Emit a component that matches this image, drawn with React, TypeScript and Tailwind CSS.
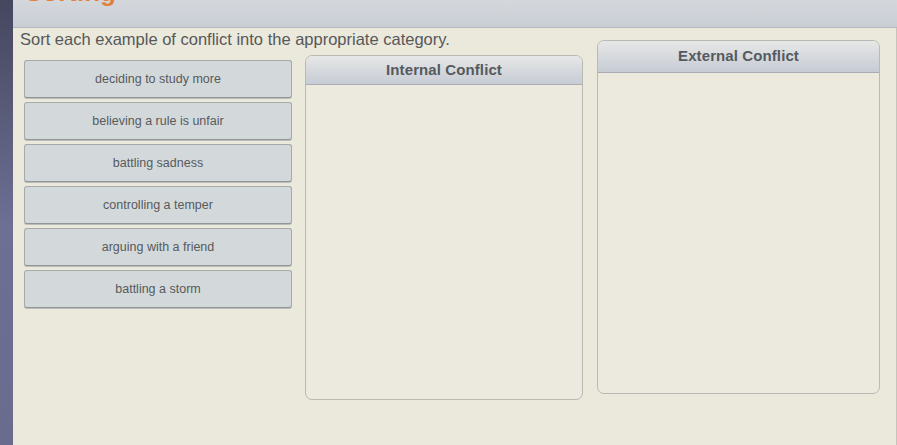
import React from "react";

const items = [
  "deciding to study more",
  "believing a rule is unfair",
  "battling sadness",
  "controlling a temper",
  "arguing with a friend",
  "battling a storm",
];

function Bin({ title, className, head }: { title: string; className: string; head: string }) {
  return (
    <div
      className={
        "flex flex-col rounded-[7px] border border-[#b9bab3] bg-[#ece9de] overflow-hidden " +
        className
      }
    >
      <div
        className={
          "shrink-0 flex items-center justify-center bg-gradient-to-b from-[#e6e7e6] to-[#c7ccd5] border-b border-[#a9adb3] text-[15px] font-bold text-[#555a5e] tracking-[0.1px] " +
          head
        }
      >
        {title}
      </div>
      <div className="flex-1" />
    </div>
  );
}

export default function App() {
  return (
    <div
      className="w-[897px] h-[445px] flex overflow-hidden bg-[#ebe8dc]"
      style={{ fontFamily: '"Liberation Sans", Arial, sans-serif' }}
    >
      <div className="w-[13px] shrink-0 bg-gradient-to-b from-[#45475f] via-[#6d6f93] to-[#6a6c8e]" />
      <div className="flex-1 flex flex-col">
        <div className="h-[28px] shrink-0 bg-gradient-to-b from-[#d4d8dd] to-[#c9ced4] border-b border-[#b4b8bc] overflow-hidden pl-[12px]">
          <div className="-mt-[24px] h-[32px] text-[26px] leading-[32px] font-bold text-[#e0823c]">Sorting</div>
        </div>
        <div className="flex-1 flex flex-col pl-[7px] pr-[4px] border-r border-[#c6c5bd]">
          <div className="mt-[2px] text-[16.5px] text-[#56585a] leading-[18px]">
            Sort each example of conflict into the appropriate category.
          </div>
          <div className="flex items-start mt-[6px]">
            <div className="w-[268px] ml-[4px] mt-[6px] flex flex-col gap-[4px]">
              {items.map((t) => (
                <div
                  key={t}
                  className="h-[38px] flex items-center justify-center rounded-[3px] border border-[#a6aaab] border-b-[#8f9598] bg-[#d3d9db] text-[12.5px] text-[#57595b] shadow-[0_1px_0_#b9bdbb]"
                >
                  {t}
                </div>
              ))}
            </div>
            <Bin title="Internal Conflict" head="h-[29px]" className="ml-[13px] mt-[1px] w-[278px] h-[345px]" />
            <Bin title="External Conflict" head="h-[32px]" className="ml-[14px] -mt-[14px] w-[283px] h-[354px]" />
          </div>
        </div>
      </div>
    </div>
  );
}
